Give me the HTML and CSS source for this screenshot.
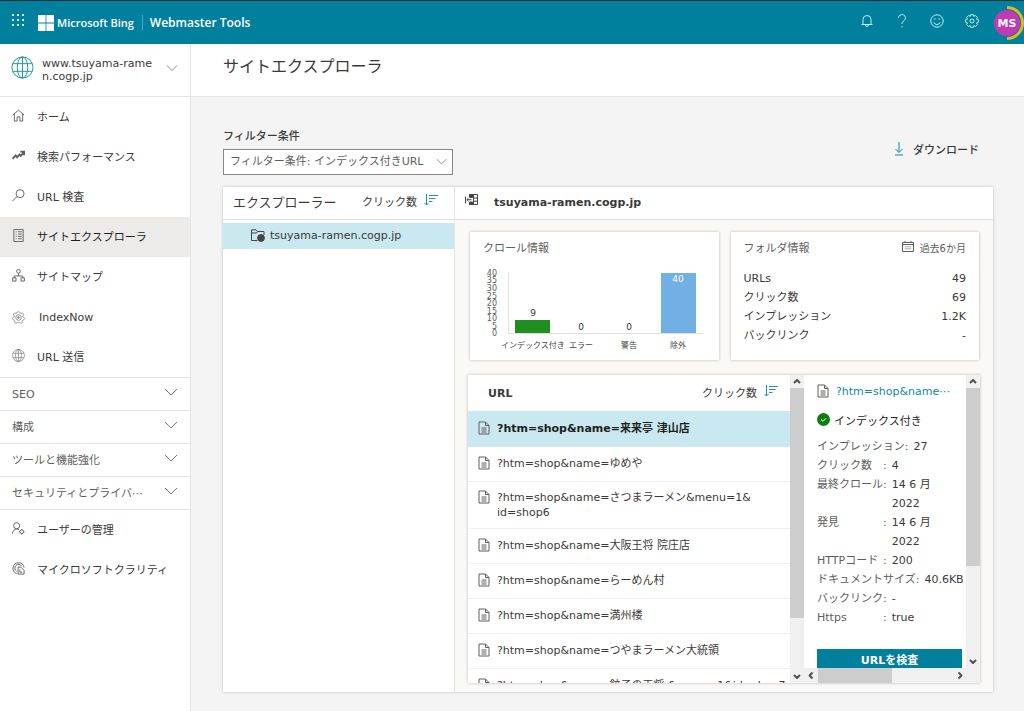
FILE: index.html
```html
<!DOCTYPE html>
<html lang="ja">
<head>
<meta charset="utf-8">
<meta name="viewport" content="width=device-width, initial-scale=1">
<title>サイトエクスプローラ - Webmaster Tools</title>
<link rel="stylesheet" href="styles.css">
</head>
<body>
<svg class="defs" aria-hidden="true">
  <symbol id="doc" viewBox="0 0 12 14"><path d="M1 1h6.500L11 4.500V13H1zM7.500 1v3.500H11M3.500 7h5M3.500 9h5M3.500 11h5"/></symbol>
  <symbol id="chev" viewBox="0 0 14 8"><path d="M1 1l6 6 6-6"/></symbol>
  <symbol id="sort" viewBox="0 0 14 12"><path d="M2.500 0v11M.5 9l2 2 2-2M5 1.500h9M5 4.500h6.500M5 7.500h3.500"/></symbol>
  <symbol id="arrow" viewBox="0 0 8 5"><path d="M1 4l3-3 3 3"/></symbol>
  <symbol id="globe" viewBox="0 0 24 24"><circle cx="12" cy="12" r="11"/><ellipse cx="12" cy="12" rx="5.500" ry="11"/><path d="M12 1v22M2 8h20M2 16h20"/></symbol>
</svg>

<header class="topbar">
  <button class="waffle" aria-label="アプリ"><svg width="14" height="14" viewBox="0 0 14 14"><path d="M0 0h2v2H0zM5 0h2v2H5zM10 0h2v2h-2zM0 5h2v2H0zM5 5h2v2H5zM10 5h2v2h-2zM0 10h2v2H0zM5 10h2v2H5zM10 10h2v2h-2z"/></svg></button>
  <svg class="mslogo" width="16" height="16" viewBox="0 0 16 16" aria-hidden="true"><path d="M0 0h7.600v7.600H0zM8.400 0H16v7.600H8.400zM0 8.400h7.600V16H0zM8.400 8.400H16V16H8.400z"/></svg>
  <span class="brand">Microsoft Bing</span>
  <span class="product">Webmaster Tools</span>
  <nav class="tools" aria-label="ツール">
    <button aria-label="通知"><svg width="14" height="14" viewBox="0 0 14 14"><path d="M3 10.500V5.500a4 4 0 0 1 8 0v5M1.500 10.500h11M5.500 11a1.500 1.500 0 0 0 3 0"/></svg></button>
    <button aria-label="ヘルプ"><svg width="14" height="14" viewBox="0 0 14 14"><path d="M3.500 4a3.500 3.300 0 1 1 5.800 2.300C8 7.400 7 8 7 10M7 12v1.300"/></svg></button>
    <button aria-label="フィードバック"><svg width="14" height="14" viewBox="0 0 14 14"><circle cx="7" cy="7" r="6.200"/><path d="M3.800 8.500a3.500 3.500 0 0 0 6.400 0M4.800 4.300v1.500M9.200 4.300v1.500"/></svg></button>
    <button aria-label="設定"><svg width="14" height="14" viewBox="0 0 14 14"><path d="M5.600.7h2.800l.4 1.700 1.600-.9 2 2-.9 1.600 1.800.5v2.800l-1.800.5.9 1.600-2 2-1.600-.9-.4 1.700H5.600l-.4-1.700-1.600.9-2-2 .9-1.600-1.800-.5V5.600l1.800-.5-.9-1.600 2-2 1.600.9z"/><circle cx="7" cy="7" r="2"/></svg></button>
    <button class="avatar" aria-label="アカウント MS"><svg width="34" height="34" viewBox="0 0 34 34"><circle class="disc" cx="17" cy="17" r="13"/><path class="ring" d="M17 1.500A15.500 15.500 0 0 1 17 32.500"/><text x="17" y="21" text-anchor="middle">MS</text></svg></button>
  </nav>
</header>

<div class="layout">
  <aside class="sidebar">
    <button class="site">
      <svg class="site-globe" width="23" height="23"><use href="#globe"/></svg>
      <span>www.tsuyama-rame<br>n.cogp.jp</span>
      <svg class="chev" width="12" height="8"><use href="#chev"/></svg>
    </button>
    <nav>
      <a class="item" href="#"><svg viewBox="0 0 14 14"><path d="M1 6.500L7 1.200l6 5.300M2.500 5.500V13H5.500V8.500h3V13h3V5.500"/></svg>ホーム</a>
      <a class="item" href="#"><svg viewBox="0 0 14 14" class="bold"><path d="M.5 10.500l3.500-3.500 1.500 2 2.500-3 1.500 1.500L13 3M9 2.800h4v4"/></svg>検索パフォーマンス</a>
      <a class="item" href="#"><svg viewBox="0 0 14 14"><circle cx="8.700" cy="5" r="4.300"/><path d="M5.500 8L.5 13"/></svg>URL 検査</a>
      <a class="item current" href="#" aria-current="page"><svg viewBox="0 0 14 14"><path d="M2 .5h10v13H2zM4 3h1M6.500 3h4M4 5.500h1M6.500 5.500h4M4 8h1M6.500 8h4M4 10.500h1M6.500 10.500h4"/></svg>サイトエクスプローラ</a>
      <a class="item" href="#"><svg viewBox="0 0 14 14"><circle cx="7" cy="2.500" r="2"/><path d="M7 4.500v3M2.500 9.500v-2h9v2M.7 9.500h3.600v3.500H.7zM9.700 9.500h3.600v3.500H9.700z"/></svg>サイトマップ</a>
      <a class="item indexnow" href="#"><svg viewBox="0 0 14 14"><path d="M7 .6C8.300.6 8.400 2.400 9.400 2.500c1 .1 2.300-.7 2.900.4.700 1.100-.8 2-.8 3 0 .9 2 1.100 2 2.300s-1.700 1.300-2.200 2.100c-.5.900.2 2.200-1 2.700-1.200.5-2-1-3.300-1s-2.100 1.500-3.300 1c-1.200-.5-.5-1.800-1-2.700C2.200 9.500.5 9.400.5 8.200s2-1.400 2-2.300c0-1-1.500-1.900-.8-3 .6-1.100 1.900-.3 2.900-.4C5.600 2.400 5.700.6 7 .6z"/><circle cx="7" cy="7" r="3"/><path d="M5.500 7h3M7 5.500v3"/></svg>IndexNow</a>
      <a class="item" href="#"><svg viewBox="0 0 24 24" class="thick"><use href="#globe"/></svg>URL 送信</a>
      <button class="group">SEO<svg class="chev" width="14" height="8"><use href="#chev"/></svg></button>
      <button class="group">構成<svg class="chev" width="14" height="8"><use href="#chev"/></svg></button>
      <button class="group">ツールと機能強化<svg class="chev" width="14" height="8"><use href="#chev"/></svg></button>
      <button class="group last">セキュリティとプライバ⋯<svg class="chev" width="14" height="8"><use href="#chev"/></svg></button>
      <a class="item" href="#"><svg viewBox="0 0 14 14"><circle cx="5" cy="4" r="3.300"/><path d="M.5 12.500C.8 9.500 2.500 8 4.700 7.500c1.500 0 2.300.4 3 1.100"/><circle cx="10.500" cy="10.500" r="2"/><path d="M10.500 7.500v1M10.500 12.500v1M7.500 10.500h1M12.500 10.500h1"/></svg>ユーザーの管理</a>
      <a class="item" href="#"><svg viewBox="0 0 14 14"><path d="M13 6A6 6 0 1 0 5 12.500M10.500 4.500A4 4 0 1 0 5 10M6.500 5.500h3l3.500 3.500v4H6.500zM8.500 8v3h2.500"/></svg>マイクロソフトクラリティ</a>
    </nav>
  </aside>

  <main class="main">
    <h1 class="title">サイトエクスプローラ</h1>
    <div class="content">
      <div class="filters">
        <div class="filter">
          <label for="filter">フィルター条件</label>
          <div class="select">
            <select id="filter"><option>フィルター条件: インデックス付きURL</option></select>
            <svg class="chev" width="11" height="7" aria-hidden="true"><use href="#chev"/></svg>
          </div>
        </div>
        <button class="download"><svg width="10" height="14" viewBox="0 0 10 14"><path d="M5 0v10M1.500 7L5 10.500 8.500 7M1 13h8"/></svg>ダウンロード</button>
      </div>

      <div class="panel">
        <section class="explorer">
          <header class="panel-head">
            <h2>エクスプローラー</h2>
            <button class="sort">クリック数<svg width="14" height="12"><use href="#sort"/></svg></button>
          </header>
          <button class="folder"><svg width="14" height="13" viewBox="0 0 14 13"><path d="M6.500 11.500h-6V.8h4.500l1.500 1.700H13V6M.5 4h5l1.500-1.500"/><circle class="fill" cx="10" cy="9" r="3.400"/></svg>tsuyama-ramen.cogp.jp</button>
        </section>

        <section class="details">
          <header class="panel-head domain">
            <svg width="13" height="12" viewBox="0 0 13 12"><path d="M4 .5h8.500v10H4M.5 2.500v7M8.500.5v10M8.500 4h4M8.500 7.200h4"/><path class="fill" d="M4.500 1h3v2.500h-3zM4.500 8h3v2.500h-3z"/><path d="M6.500 5.700H2M3.500 4L1.800 5.700l1.700 1.700"/></svg>
            <h2>tsuyama-ramen.cogp.jp</h2>
          </header>
          <div class="body">
            <div class="cards">
              <section class="card">
                <h3>クロール情報</h3>
                <svg class="chart" width="222" height="90" viewBox="0 0 222 90" role="img" aria-label="クロール情報のグラフ">
                  <path class="axis" d="M25.500 10v60.500H220"/>
                  <g class="ticks"><text x="14" y="13">40</text><text x="14" y="20">35</text><text x="14" y="28">30</text><text x="14" y="36">25</text><text x="14" y="43">20</text><text x="14" y="51">15</text><text x="14" y="58">10</text><text x="14" y="66">5</text><text x="14" y="73">0</text></g>
                  <rect class="green" x="32" y="57" width="35" height="13"/>
                  <rect class="blue" x="178" y="10" width="35" height="60"/>
                  <g class="values"><text x="50" y="53">9</text><text x="98" y="67">0</text><text x="146" y="67">0</text><text class="inside" x="195" y="19">40</text></g>
                  <g class="names"><text x="50" y="85">インデックス付き</text><text x="98" y="85">エラー</text><text x="146" y="85">警告</text><text x="195" y="85">除外</text></g>
                </svg>
              </section>
              <section class="card">
                <div class="card-head">
                  <h3>フォルダ情報</h3>
                  <span class="period"><svg width="12" height="11" viewBox="0 0 12 11"><path d="M.5 1.500h11v9H.5zM.5 3.500h11M3 0v2M9 0v2"/><path class="days" d="M2.500 5.500h7M2.500 7.500h7M4 5v4M6 5v4M8 5v4"/></svg>過去6か月</span>
                </div>
                <dl class="stats">
                  <div><dt>URLs</dt><dd>49</dd></div>
                  <div><dt>クリック数</dt><dd>69</dd></div>
                  <div><dt>インプレッション</dt><dd>1.2K</dd></div>
                  <div><dt>バックリンク</dt><dd>-</dd></div>
                </dl>
              </section>
            </div>

            <div class="browser">
              <div class="list">
                <table>
                  <thead><tr><th>URL</th><th class="num"><button class="sort">クリック数<svg width="14" height="12"><use href="#sort"/></svg></button></th></tr></thead>
                  <tbody>
                    <tr class="selected"><td colspan="2"><a href="#"><svg><use href="#doc"/></svg><span>?htm=shop&amp;name=来来亭 津山店</span></a></td></tr>
                    <tr><td colspan="2"><a href="#"><svg><use href="#doc"/></svg><span>?htm=shop&amp;name=ゆめや</span></a></td></tr>
                    <tr><td colspan="2"><a href="#"><svg><use href="#doc"/></svg><span>?htm=shop&amp;name=さつまラーメン&amp;menu=1&amp;<wbr>id=shop6</span></a></td></tr>
                    <tr><td colspan="2"><a href="#"><svg><use href="#doc"/></svg><span>?htm=shop&amp;name=大阪王将 院庄店</span></a></td></tr>
                    <tr><td colspan="2"><a href="#"><svg><use href="#doc"/></svg><span>?htm=shop&amp;name=らーめん村</span></a></td></tr>
                    <tr><td colspan="2"><a href="#"><svg><use href="#doc"/></svg><span>?htm=shop&amp;name=満州楼</span></a></td></tr>
                    <tr><td colspan="2"><a href="#"><svg><use href="#doc"/></svg><span>?htm=shop&amp;name=つやまラーメン大統領</span></a></td></tr>
                    <tr><td colspan="2"><a href="#"><svg><use href="#doc"/></svg><span class="single">?htm=shop&amp;name=餃子の王将 &amp;menu=1&amp;id=shop7</span></a></td></tr>
                  </tbody>
                </table>
              </div>
              <div class="vbar list-bar" aria-hidden="true"><svg><use href="#arrow"/></svg><i class="thumb"></i><svg class="down"><use href="#arrow"/></svg></div>
              <div class="inspect">
                <div class="inspect-row">
                  <div class="info">
                    <a class="page" href="#"><svg><use href="#doc"/></svg>?htm=shop&amp;name⋯</a>
                    <p class="status"><svg width="13" height="13" viewBox="0 0 13 13"><circle cx="6.500" cy="6.500" r="6.500"/><path d="M4 6.500l2 1.800 3-3"/></svg>インデックス付き</p>
                    <dl class="facts">
                      <div><dt><span>インプレッション</span>:</dt><dd>27</dd></div>
                      <div><dt><span>クリック数</span>:</dt><dd>4</dd></div>
                      <div><dt><span>最終クロール</span>:</dt><dd>14 6 月<br>2022</dd></div>
                      <div><dt><span>発見</span>:</dt><dd>14 6 月<br>2022</dd></div>
                      <div><dt><span>HTTPコード</span>:</dt><dd>200</dd></div>
                      <div><dt><span>ドキュメントサイズ</span>:</dt><dd>40.6KB</dd></div>
                      <div><dt><span>バックリンク</span>:</dt><dd>-</dd></div>
                      <div><dt><span>Https</span>:</dt><dd>true</dd></div>
                    </dl>
                    <button class="primary">URLを検査</button>
                  </div>
                  <div class="vbar info-bar" aria-hidden="true"><svg><use href="#arrow"/></svg><i class="thumb"></i><svg class="down"><use href="#arrow"/></svg></div>
                </div>
                <div class="hbar" aria-hidden="true"><svg class="left"><use href="#arrow"/></svg><i class="thumb"></i><svg class="right"><use href="#arrow"/></svg></div>
              </div>
            </div>
          </div>
        </section>
      </div>
    </div>
  </main>
</div>
</body>
</html>
```
FILE: styles.css
```css
* { box-sizing: border-box; }
body {
  margin: 0;
  min-height: 100vh;
  display: flex;
  flex-direction: column;
  background: #f4f4f4;
  color: #3b3a39;
  font-family: "DejaVu Sans", "Noto Sans CJK JP", sans-serif;
  font-size: 11px;
  line-height: 15px;
}
h1, h2, h3, p, dl, dd { margin: 0; font-weight: 400; }
h3 { font-size: 11px; color: #605e5c; }
a { color: inherit; text-decoration: none; }
button, select {
  font: inherit;
  color: inherit;
  background: none;
  border: 0;
  padding: 0;
  text-align: left;
}
svg { flex: none; fill: none; stroke: currentColor; }
svg text { stroke: none; }
.defs { position: absolute; width: 0; height: 0; }
.fill { fill: currentColor; }
.chev { color: #797775; }

.topbar {
  height: 44px;
  display: flex;
  align-items: center;
  border-top: 1px solid #14323c;
  background: #00809d;
  color: #fff;
  padding-left: 12px;
  font-family: "Open Sans", sans-serif;
  font-weight: 600;
  font-size: 12px;
}
.waffle { padding-bottom: 4px; height: 18px; }
.waffle svg, .mslogo { fill: #fff; stroke: none; display: block; }
.waffle svg { fill: #d5f1f6; }
.mslogo { margin-left: 12px; }
.brand { margin-left: 3px; font-size: 11px; }
.product { margin-left: 8px; padding-left: 7px; border-left: 1px solid #4fa8bb; }
.tools { margin-left: auto; display: flex; align-items: center; color: #c4eef5; }
.tools button { width: 35px; display: flex; justify-content: center; padding-bottom: 4px; }
.tools .avatar { width: 35px; padding: 0; }
.disc { fill: #c239b3; stroke: none; }
.ring { stroke: #e3b422; stroke-width: 3; }
.avatar text { fill: #fff; font: bold 11px "DejaVu Sans", sans-serif; }

.layout { flex: 1; display: flex; }
.sidebar { width: 191px; flex: none; background: #fff; border-right: 1px solid #e5e5e5; }
.site {
  width: 100%;
  height: 53px;
  display: flex;
  align-items: center;
  gap: 8px;
  padding: 0 12px 0 11px;
  border-bottom: 1px solid #e5e5e5;
  line-height: 13px;
}
.site span { flex: 1; }
.site-globe { color: #1a93ad; stroke-width: 1; margin-bottom: 6px; }
.site .chev { margin-bottom: 4px; }
.item { height: 40px; display: flex; align-items: center; gap: 12px; padding-left: 12px; color: #3b3a39; }
.item svg { width: 13px; height: 13px; margin-bottom: 4px; color: #605e5c; }
.item svg.thick { stroke-width: 1; }
.item svg.bold { stroke-width: 2; }
.item.indexnow { gap: 14px; }
.item.indexnow svg { margin-bottom: 0; color: #8a8886; }
.item.current { background: #edebe9; color: #201f1e; }
.group {
  width: 100%;
  height: 33px;
  display: flex;
  align-items: center;
  justify-content: space-between;
  padding: 0 12px;
  border-top: 1px solid #e5e5e5;
  color: #605e5c;
}
.group .chev { margin-bottom: 4px; }
.group.last { height: 34px; border-bottom: 1px solid #e5e5e5; }

.main { flex: 1; min-width: 0; }
.title {
  background: #fff;
  border-bottom: 1px solid #e5e5e5;
  padding: 11px 32px 17px;
  font-size: 16px;
  line-height: 24px;
}
.content { padding: 32px 31px 19px 32px; }
.filters { display: flex; justify-content: space-between; align-items: flex-start; }
.filter label { display: block; margin-bottom: 5px; line-height: 15px; font-weight: 500; }
.select { display: grid; width: 230px; align-items: center; }
.select select {
  grid-area: 1 / 1;
  appearance: none;
  height: 26px;
  padding: 0 22px 1px 6px;
  border: 1px solid #8a8886;
  background: #fff;
  color: #605e5c;
}
.select .chev { grid-area: 1 / 1; justify-self: end; margin: 0 6px 2px 0; pointer-events: none; }
.download { display: flex; align-items: center; gap: 9px; margin: 13px 14px 0 0; font-weight: 500; }
.download svg { color: #0a8ca0; margin-bottom: 3px; }

.panel { display: flex; margin-top: 12px; background: #fff; box-shadow: 0 0 3px rgba(0, 0, 0, .22); }
.explorer { width: 232px; flex: none; border-right: 1px solid #e5e5e5; }
.panel-head {
  height: 33px;
  display: flex;
  align-items: center;
  justify-content: space-between;
  border-bottom: 1px solid #e1dfdd;
  padding: 0 16px 2px 10px;
  background: #fff;
}
.explorer h2 { font-size: 13px; }
.sort { display: inline-flex; align-items: center; gap: 7px; font-weight: 400; }
.sort svg { color: #1c8fb0; margin-bottom: 4px; }
.folder { width: 100%; display: flex; align-items: center; gap: 5px; height: 26px; margin-top: 3px; padding: 0 0 2px 28px; background: #c9e8ef; }
.folder svg { color: #484644; }
.details { flex: 1; min-width: 0; }
.panel-head.domain { justify-content: flex-start; gap: 16px; padding: 0 10px 1px; }
.domain svg { margin-bottom: 6px; color: #484644; }
.domain h2 { font-size: 11px; font-weight: 700; }
.body { background: #faf9f8; padding: 12px 13px 9px; }
.cards { display: flex; gap: 12px; padding: 0 1px 0 2px; }
.card { flex: 1; height: 128px; background: #fff; box-shadow: 0 0 3px rgba(0, 0, 0, .25); padding: 9px 13px 0; }
.card h3 { line-height: 15px; }
.chart { display: block; margin-top: 7px; }
.axis { stroke: #e1dfdd; }
.green { fill: #1f8f1f; stroke: none; }
.blue { fill: #71afe5; stroke: none; }
.ticks text { font-size: 8px; fill: #605e5c; text-anchor: end; }
.values text { font-size: 9px; fill: #323130; text-anchor: middle; }
.values .inside { fill: #fff; }
.names text { font-size: 8px; fill: #484644; text-anchor: middle; }
.card-head { display: flex; justify-content: space-between; color: #605e5c; }
.period { display: flex; gap: 6px; font-size: 10px; }
.period .days { stroke: #c8c6c4; }
.stats { padding-top: 13px; line-height: 19px; }
.stats div { display: flex; justify-content: space-between; }

.browser { display: flex; height: 308px; margin-top: 15px; background: #fff; box-shadow: 0 0 3px rgba(0, 0, 0, .25); }
.list { flex: 1; min-width: 0; overflow: hidden; }
table { width: 100%; border-collapse: collapse; }
th { height: 36px; padding: 0 12px 0 20px; text-align: left; font-size: 11px; }
th.num { text-align: right; }
td { height: 35px; padding: 8px 0; border-bottom: 1px solid #efefef; }
td a { display: flex; gap: 7px; padding: 0 0 0 10px; }
td .single { white-space: nowrap; }
td svg, .page svg { width: 12px; height: 14px; color: #605e5c; }
tr.selected td { background: #c9e8ef; color: #201f1e; font-weight: 700; border-color: #c9e8ef; }
.vbar { width: 14px; flex: none; display: flex; flex-direction: column; align-items: center; background: #f0f0f0; color: #505050; }
.vbar svg, .hbar svg { width: 8px; height: 5px; margin: 4px 0; stroke-width: 2; }
.vbar .down { transform: rotate(180deg); margin-top: auto; }
.thumb { background: #cdcdcd; }
.vbar .thumb { width: 100%; }
.list-bar .thumb { height: 230px; }
.info-bar .thumb { height: 178px; }
.inspect { width: 176px; flex: none; display: flex; flex-direction: column; }
.inspect-row { flex: 1; min-height: 0; display: flex; }
.info { flex: 1; min-width: 0; overflow: hidden; padding: 9px 4px 0 13px; }
.page { display: flex; gap: 7px; color: #0f8a9d; }
.status { display: flex; align-items: center; gap: 4px; margin-top: 14px; line-height: 17px; color: #201f1e; }
.status svg { fill: #107c10; stroke: none; margin-bottom: 4px; }
.status path { stroke: #fff; fill: none; }
.facts { margin-top: 7px; line-height: 19px; white-space: nowrap; }
.facts div { display: flex; gap: 5px; }
.facts dt { display: flex; color: #605e5c; }
.facts dt span { min-width: 66px; }
.primary { width: 100%; height: 23px; margin-top: 22px; background: #00809d; color: #fff; font-weight: 700; text-align: center; }
.hbar { height: 15px; display: flex; align-items: center; background: #f0f0f0; color: #505050; padding: 0 16px 0 3px; }
.hbar .left { transform: rotate(-90deg); }
.hbar .right { transform: rotate(90deg); margin-left: auto; }
.hbar .thumb { width: 74px; height: 15px; margin-left: 3px; }
```
